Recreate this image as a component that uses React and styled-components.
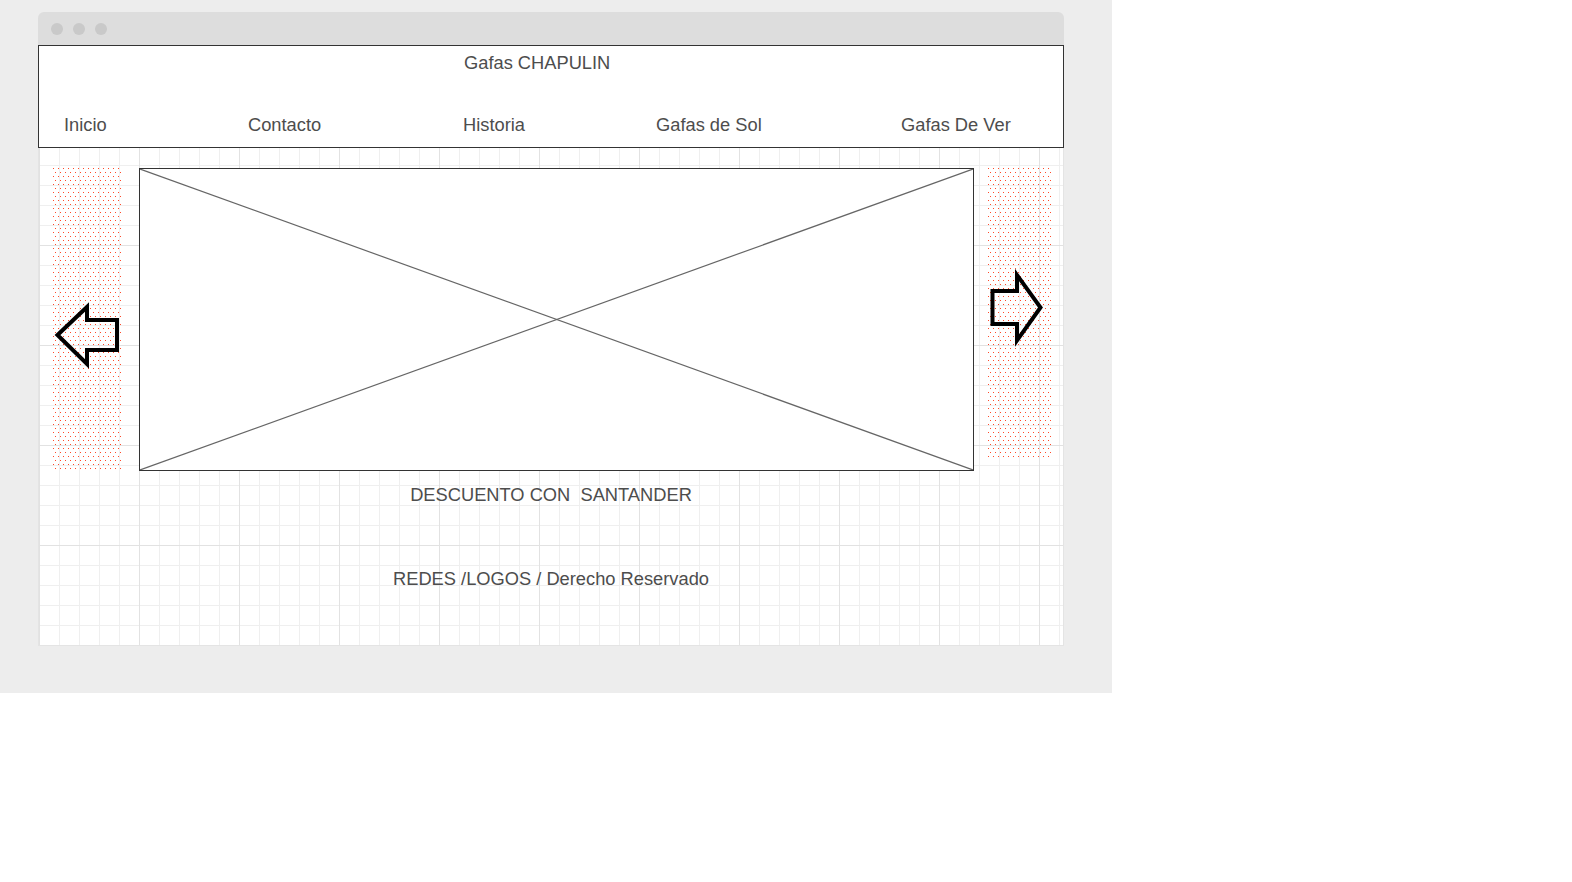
import React from "react";
import styled, { createGlobalStyle } from "styled-components";

const navItems = [
  { label: "Inicio", width: 184 },
  { label: "Contacto", width: 215 },
  { label: "Historia", width: 193 },
  { label: "Gafas de Sol", width: 245 },
  { label: "Gafas De Ver", width: 150 },
];

const GlobalStyle = createGlobalStyle`
  body {
    margin: 0;
    background: #ffffff;
    font-family: "Liberation Sans", Arial, sans-serif;
  }
`;

const Backdrop = styled.div`
  width: 1112px;
  height: 693px;
  box-sizing: border-box;
  padding: 12px 0 0 38px;
  background-color: #ededed;
`;

const Window = styled.div`
  width: 1026px;
  display: flex;
  flex-direction: column;
`;

const TitleBar = styled.div`
  height: 33px;
  display: flex;
  align-items: center;
  gap: 10px;
  padding-left: 13px;
  background-color: #dddddd;
  border-radius: 6px 6px 0 0;
`;

const Dot = styled.span`
  width: 12px;
  height: 12px;
  border-radius: 50%;
  background-color: #c9c9c9;
`;

const Canvas = styled.div`
  height: 600px;
  display: flex;
  flex-direction: column;
  border: 1px solid #e4e4e4;
  border-top: none;
  background-color: #ffffff;
  background-image: linear-gradient(#e2e2e2 1px, transparent 1px),
    linear-gradient(90deg, #e2e2e2 1px, transparent 1px),
    linear-gradient(#efefef 1px, transparent 1px),
    linear-gradient(90deg, #efefef 1px, transparent 1px);
  background-size: 100px 100px, 100px 100px, 20px 20px, 20px 20px;
`;

const Header = styled.header`
  height: 103px;
  box-sizing: border-box;
  margin: 0 -1px;
  padding-top: 7px;
  border: 1px solid #333333;
  background-color: #ffffff;
  display: flex;
  flex-direction: column;
  color: #4d4d4d;
  font-size: 18.3px;
  line-height: 20px;
`;

const Brand = styled.div`
  padding-left: 425px;
`;

const Nav = styled.nav`
  display: flex;
  margin-top: 42px;
  padding-left: 25px;
`;

const NavItem = styled.span`
  width: ${(p) => p.$width}px;
  flex-shrink: 0;
`;

const Stage = styled.div`
  display: flex;
  align-items: flex-start;
  margin-top: 19px;
  padding-left: 13px;
`;

const DottedPanel = styled.div`
  width: ${(p) => p.$width}px;
  height: ${(p) => p.$height}px;
  flex-shrink: 0;
  margin-right: ${(p) => p.$gap || 0}px;
  background-image: radial-gradient(
      circle at 1.5px 1.5px,
      #ff4a2a 0.7px,
      transparent 0.72px
    ),
    radial-gradient(circle at 1.5px 1.5px, #ff4a2a 0.7px, transparent 0.72px);
  background-size: 5px 8px;
  background-position: 0 0, 2px 4px;

  svg {
    display: block;
  }
`;

const Placeholder = styled.div`
  width: 835px;
  height: 303px;
  box-sizing: border-box;
  margin: 1px 13px 0 0;
  flex-shrink: 0;
  border: 1px solid #333333;
  background-color: #ffffff;

  svg {
    display: block;
    width: 100%;
    height: 100%;
  }
`;

const Caption = styled.div`
  margin-top: ${(p) => p.$top}px;
  text-align: center;
  white-space: pre;
  color: #4d4d4d;
  font-size: 18.3px;
  line-height: 20px;
`;

const LeftArrow = () => (
  <svg width="71" height="302" viewBox="0 0 71 302">
    <polygon
      points="5.5,168 35,140 35,153 65,153 65,183 35,183 35,197"
      fill="none"
      stroke="#000"
      strokeWidth="4"
    />
  </svg>
);

const RightArrow = () => (
  <svg width="64" height="290" viewBox="0 0 64 290">
    <polygon
      points="5.5,124 30,124 30,108 53.5,140.5 30,173.5 30,157 5.5,157"
      fill="none"
      stroke="#000"
      strokeWidth="4"
    />
  </svg>
);

const App = () => {
  return (
    <>
      <GlobalStyle />
      <Backdrop>
        <Window>
          <TitleBar>
            <Dot />
            <Dot />
            <Dot />
          </TitleBar>
          <Canvas>
            <Header>
              <Brand>Gafas CHAPULIN</Brand>
              <Nav>
                {navItems.map((item) => (
                  <NavItem key={item.label} $width={item.width}>
                    {item.label}
                  </NavItem>
                ))}
              </Nav>
            </Header>
            <Stage>
              <DottedPanel $width={71} $height={302} $gap={16}>
                <LeftArrow />
              </DottedPanel>
              <Placeholder>
                <svg viewBox="0 0 100 100" preserveAspectRatio="none">
                  <line x1="0" y1="0" x2="100" y2="100" stroke="#666" strokeWidth="1.2" vectorEffect="non-scaling-stroke" />
                  <line x1="100" y1="0" x2="0" y2="100" stroke="#666" strokeWidth="1.2" vectorEffect="non-scaling-stroke" />
                </svg>
              </Placeholder>
              <DottedPanel $width={64} $height={290}>
                <RightArrow />
              </DottedPanel>
            </Stage>
            <Caption $top={14}>DESCUENTO CON  SANTANDER</Caption>
            <Caption $top={64}>REDES /LOGOS / Derecho Reservado</Caption>
          </Canvas>
        </Window>
      </Backdrop>
    </>
  );
};

export default App;
